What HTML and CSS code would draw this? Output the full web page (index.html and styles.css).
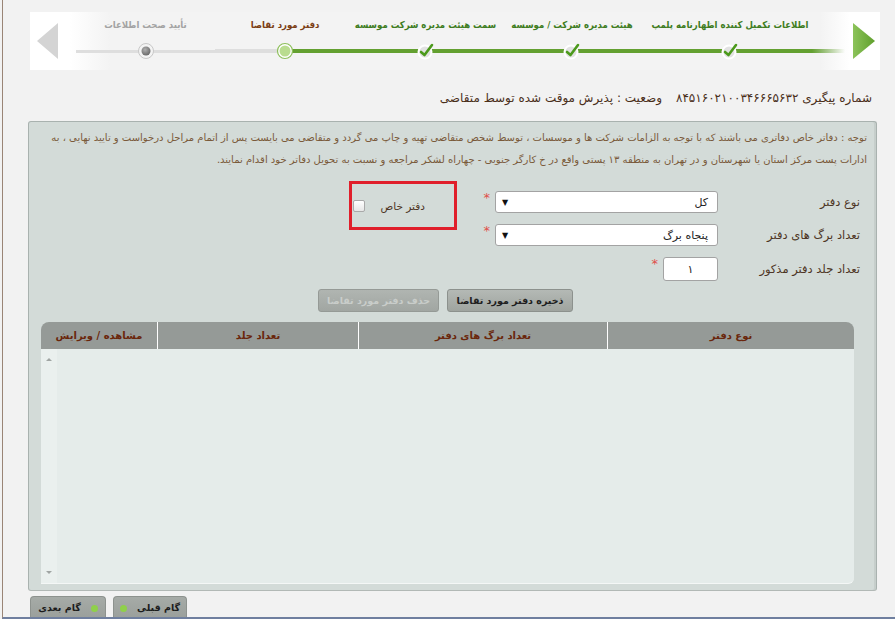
FILE: index.html
```html
<!DOCTYPE html>
<html lang="fa" dir="rtl">
<head>
<meta charset="utf-8">
<title>دفتر مورد تقاضا</title>
<link rel="stylesheet" href="styles.css">
</head>
<body>
<div class="frame">
  <div class="stepper">
    <div class="arrow-zone arrow-zone-right">
      <svg width="22" height="36" viewBox="0 0 22 36"><defs><linearGradient id="ga" x1="0" y1="0" x2="1" y2="0"><stop offset="0" stop-color="#8cc35a"/><stop offset="1" stop-color="#5f9f2c"/></linearGradient></defs><polygon points="0,0 22,18 0,36" fill="url(#ga)"/></svg>
    </div>
    <div class="step ext">
      <div class="step-label"></div>
      <div class="track"></div>
    </div>
    <div class="step done w1">
      <div class="step-label">اطلاعات تکمیل کننده اظهارنامه پلمپ</div>
      <div class="track"><svg class="node" width="20" height="18" viewBox="0 0 20 18"><circle cx="9" cy="10" r="6.5" fill="#e2e2e2" stroke="#ffffff" stroke-width="2"/><path d="M5 10 L8.5 13 L16 3" fill="none" stroke="#4c9a1c" stroke-width="2.6" stroke-linecap="round" stroke-linejoin="round"/></svg></div>
    </div>
    <div class="step done w2">
      <div class="step-label">هیئت مدیره شرکت / موسسه</div>
      <div class="track"><svg class="node" width="20" height="18" viewBox="0 0 20 18"><circle cx="9" cy="10" r="6.5" fill="#e2e2e2" stroke="#ffffff" stroke-width="2"/><path d="M5 10 L8.5 13 L16 3" fill="none" stroke="#4c9a1c" stroke-width="2.6" stroke-linecap="round" stroke-linejoin="round"/></svg></div>
    </div>
    <div class="step done w3">
      <div class="step-label">سمت هیئت مدیره شرکت موسسه</div>
      <div class="track"><svg class="node" width="20" height="18" viewBox="0 0 20 18"><circle cx="9" cy="10" r="6.5" fill="#e2e2e2" stroke="#ffffff" stroke-width="2"/><path d="M5 10 L8.5 13 L16 3" fill="none" stroke="#4c9a1c" stroke-width="2.6" stroke-linecap="round" stroke-linejoin="round"/></svg></div>
    </div>
    <div class="step current w4">
      <div class="step-label">دفتر مورد تقاضا</div>
      <div class="track"><svg class="node" width="18" height="18" viewBox="0 0 18 18"><circle cx="9" cy="9" r="7.5" fill="#ffffff" stroke="#8dbf5a" stroke-width="1.2"/><circle cx="9" cy="9" r="5.5" fill="#b9dc8f"/></svg></div>
    </div>
    <div class="step pending w5">
      <div class="step-label">تأیید صحت اطلاعات</div>
      <div class="track"><svg class="node" width="18" height="18" viewBox="0 0 18 18"><defs><radialGradient id="gg" cx="0.4" cy="0.35" r="0.7"><stop offset="0" stop-color="#b0b0b0"/><stop offset="1" stop-color="#666"/></radialGradient></defs><circle cx="9" cy="9" r="7.5" fill="#f4f4f4" stroke="#c8c8c8" stroke-width="1"/><circle cx="9" cy="9" r="4.5" fill="url(#gg)"/></svg></div>
    </div>
    <div class="arrow-zone arrow-zone-left">
      <svg width="21" height="36" viewBox="0 0 21 36"><polygon points="21,0 0,18 21,36" fill="#d4d4d4"/></svg>
    </div>
  </div>

  <div class="tracking">
    <span>شماره پیگیری ۸۴۵۱۶۰۲۱۰۰۳۴۶۶۶۵۶۳۲</span>
    <span>وضعیت : پذیرش موقت شده توسط متقاضی</span>
  </div>

  <div class="panel">
    <p class="notice">توجه : دفاتر خاص دفاتری می باشند که با توجه به الزامات شرکت ها و موسسات ، توسط شخص متقاضی تهیه و چاپ می گردد و متقاضی می بایست پس از اتمام مراحل درخواست و تایید نهایی ، به<br>ادارات پست مرکز استان یا شهرستان و در تهران به منطقه ۱۳ پستی واقع در خ کارگر جنوبی - چهاراه لشکر مراجعه و نسبت به تحویل دفاتر خود اقدام نمایند.</p>

    <div class="form">
      <div class="f-label r1">نوع دفتر</div>
      <div class="f-field r1"><div class="select"><span class="sel-val">کل</span><span class="sel-arrow">▼</span></div><span class="star">*</span></div>
      <div class="special">
        <span class="special-text">دفتر خاص</span>
        <span class="checkbox"></span>
      </div>
      <div class="f-label r2">تعداد برگ های دفتر</div>
      <div class="f-field r2"><div class="select"><span class="sel-val">پنجاه برگ</span><span class="sel-arrow">▼</span></div><span class="star">*</span></div>
      <div class="f-label r3">تعداد جلد دفتر مذکور</div>
      <div class="f-field r3"><div class="num">۱</div><span class="star">*</span></div>
    </div>

    <div class="actions">
      <button class="btn">ذخیره دفتر مورد تقاضا</button>
      <button class="btn disabled">حذف دفتر مورد تقاضا</button>
    </div>

    <div class="grid">
      <div class="grid-head">
        <div class="gh c1">نوع دفتر</div>
        <div class="gh c2">تعداد برگ های دفتر</div>
        <div class="gh c3">تعداد جلد</div>
        <div class="gh c4">مشاهده / ویرایش</div>
      </div>
      <div class="grid-body">
        <div class="scroll">
          <span class="sc-up"></span>
          <span class="sc-down"></span>
        </div>
      </div>
    </div>
  </div>

  <div class="nav">
    <button class="nav-btn"><span class="dot"></span><span>گام بعدی</span></button>
    <button class="nav-btn"><span>گام قبلی</span><span class="dot"></span></button>
  </div>
</div>
</body>
</html>
```

FILE: styles.css
```css
* { box-sizing: border-box; }

html, body { margin: 0; padding: 0; }

body {
  background: #f2f2f2;
  font-family: "DejaVu Sans", "Noto Sans", sans-serif;
  direction: rtl;
  width: 895px;
  height: 619px;
  overflow: hidden;
}

.frame {
  margin-left: 2px;
  height: 619px;
  border-left: 1px solid #9a8576;
  border-bottom: 2px solid #6f7f9f;
  padding: 12px 15px 0 25px;
  overflow: hidden;
}

/* ---------- stepper ---------- */
.stepper {
  margin-left: 2px;
  height: 58px;
  display: flex;
  align-items: stretch;
  background: linear-gradient(to right, #ffffff 0, #ffffff 40px, #f3f3f3 80px, #f3f3f3 calc(100% - 60px), #ffffff calc(100% - 30px), #ffffff 100%);
}

.arrow-zone { display: flex; align-items: center; }
.arrow-zone-right { width: 35px; padding-right: 5px; justify-content: flex-start; }
.arrow-zone-left { flex: 1; padding-left: 7px; justify-content: flex-end; }

.step {
  display: flex;
  flex-direction: column;
  align-items: center;
  padding-top: 5px;
}
.step.ext { width: 33px; }
.w1 { width: 164px; }
.w2 { width: 152px; }
.w3 { width: 141px; }
.w4 { width: 140px; }
.w5 { width: 139px; }

.step-label {
  height: 16px;
  line-height: 16px;
  font-family: "DejaVu Sans Condensed", "DejaVu Sans", sans-serif;
  font-stretch: condensed;
  font-size: 9.5px;
  font-weight: bold;
  white-space: nowrap;
}
.done .step-label { color: #3f7d1f; }
.current .step-label { color: #7b3e15; }
.pending .step-label { color: #a3a3a3; }

.track {
  margin-top: 10px;
  width: 100%;
  height: 16px;
  display: flex;
  justify-content: center;
  align-items: center;
  background-repeat: no-repeat;
  background-position: center;
  background-size: 100% 4px;
}
.done .track { background-image: linear-gradient(#63a030, #63a030); }
.ext .track { background-image: linear-gradient(to right, #63a030, rgba(99,160,48,0)); }
.current .track { background-image: linear-gradient(to right, #dedede 50%, #63a030 50%); }
.pending .track { background-image: linear-gradient(#dedede, #dedede); background-size: 100% 3px; }

.node { display: block; }

/* ---------- tracking line ---------- */
.tracking {
  margin-top: 18px;
  padding-right: 8px;
  height: 20px;
  line-height: 20px;
  font-size: 12px;
  color: #4a2f1a;
  display: flex;
  gap: 14px;
}

/* ---------- panel ---------- */
.panel {
  margin-top: 13px;
  margin-right: 3px;
  height: 470px;
  background: #d3dbd8;
  border: 1px solid #a9b2af;
  border-bottom-color: #b2b9b6;
  border-radius: 3px;
  box-shadow: inset -2px 0 0 #c6cecb;
  padding-top: 5px;
}

.notice {
  margin: 0;
  padding: 0 9px;
  font-size: 10px;
  line-height: 22px;
  color: #7a5a3a;
  white-space: nowrap;
}

.form {
  margin-top: 20px;
  padding-right: 16px;
  display: grid;
  grid-template-columns: 142px 261px 108px;
  grid-template-rows: 22px 22px 24px;
  row-gap: 11px;
  align-items: center;
}
.r1 { grid-row: 1; }
.r2 { grid-row: 2; }
.r3 { grid-row: 3; }
.f-label { grid-column: 1; font-size: 11.5px; color: #4d3524; white-space: nowrap; }
.f-field { grid-column: 2; display: flex; align-items: center; height: 100%; gap: 5px; }

.select {
  width: 223px;
  height: 22px;
  background: #fff;
  border: 1px solid #a3a3a3;
  border-radius: 3px;
  display: flex;
  align-items: center;
  justify-content: space-between;
  padding: 0 9px 0 6px;
  font-size: 11px;
  color: #222;
}
.sel-arrow { font-size: 8px; color: #111; }

.num {
  width: 55px;
  height: 24px;
  background: #fff;
  border: 1px solid #a3a3a3;
  border-radius: 3px;
  display: flex;
  align-items: center;
  justify-content: center;
  font-size: 11px;
  color: #222;
}

.star {
  color: #e0504a;
  font-size: 13px;
  align-self: flex-start;
  line-height: 14px;
}

.special {
  grid-column: 3;
  grid-row: 1 / span 2;
  align-self: start;
  margin-top: -10px;
  height: 49px;
  border: 3px solid #e01f2b;
  display: flex;
  align-items: center;
  padding-right: 29px;
  gap: 16px;
}
.special-text { font-size: 10.5px; color: #4d3524; white-space: nowrap; }
.checkbox {
  flex: none;
  width: 12px;
  height: 12px;
  border: 1px solid #a9a9a9;
  border-radius: 2px;
  background: linear-gradient(#ffffff, #e6e6e6);
}

.actions {
  margin-top: 8px;
  display: flex;
  gap: 8px;
  padding-right: 303px;
}
.btn {
  font-family: inherit;
  height: 23px;
  padding: 0 6px;
  border: 1px solid #8c918d;
  border-radius: 3px;
  background: linear-gradient(#b4b9b5, #9fa49f);
  font-size: 9.5px;
  font-weight: bold;
  color: #1e1e1e;
  width: 126px;
  white-space: nowrap;
}
.btn.disabled {
  width: 121px;
  color: #c9cdca;
  background: linear-gradient(#b0b5b1, #a1a6a2);
  border-color: #959a96;
}

.grid {
  margin: 10px 22px 0 12px;
}
.grid-head {
  display: flex;
  height: 27px;
  background: #959a97;
  border-radius: 8px 8px 0 0;
}
.gh {
  display: flex;
  align-items: center;
  justify-content: center;
  font-size: 10px;
  font-weight: bold;
  color: #6a260b;
  white-space: nowrap;
}
.c1 { width: 247px; border-left: 1px solid #ffffff; }
.c2 { width: 249px; border-left: 1px solid #ffffff; }
.c3 { width: 201px; border-left: 1px solid #ffffff; }
.c4 { flex: 1; }

.grid-body {
  height: 235px;
  background: #e5ecea;
  border-bottom: 1px solid #f4f7f6;
  border-radius: 0 0 6px 0;
  display: flex;
  justify-content: flex-end;
}
.scroll {
  width: 16px;
  height: 100%;
  background: #eaf0ee;
  position: relative;
}
.sc-up, .sc-down {
  position: absolute;
  left: 5px;
  width: 0;
  height: 0;
  border-left: 3px solid transparent;
  border-right: 3px solid transparent;
}
.sc-up { top: 9px; border-bottom: 3px solid #a0a5a3; }
.sc-down { bottom: 9px; border-top: 3px solid #a0a5a3; }

/* ---------- bottom nav ---------- */
.nav {
  margin-top: 5px;
  margin-left: 2px;
  direction: ltr;
  display: flex;
  gap: 7px;
}
.nav-btn {
  font-family: inherit;
  direction: rtl;
  height: 26px;
  border: 1px solid #8d928e;
  border-bottom: none;
  border-radius: 4px 4px 0 0;
  background: linear-gradient(#a6aba7, #989d99);
  font-size: 9.5px;
  font-weight: bold;
  color: #1c1c1c;
  display: flex;
  align-items: flex-start;
  padding-top: 5px;
  gap: 10px;
  justify-content: center;
}
.nav-btn:first-child { width: 76px; }
.nav-btn:last-child { width: 74px; }
.dot {
  width: 7px;
  height: 7px;
  border-radius: 50%;
  background: #8fd04a;
  margin-top: 3px;
}
```
